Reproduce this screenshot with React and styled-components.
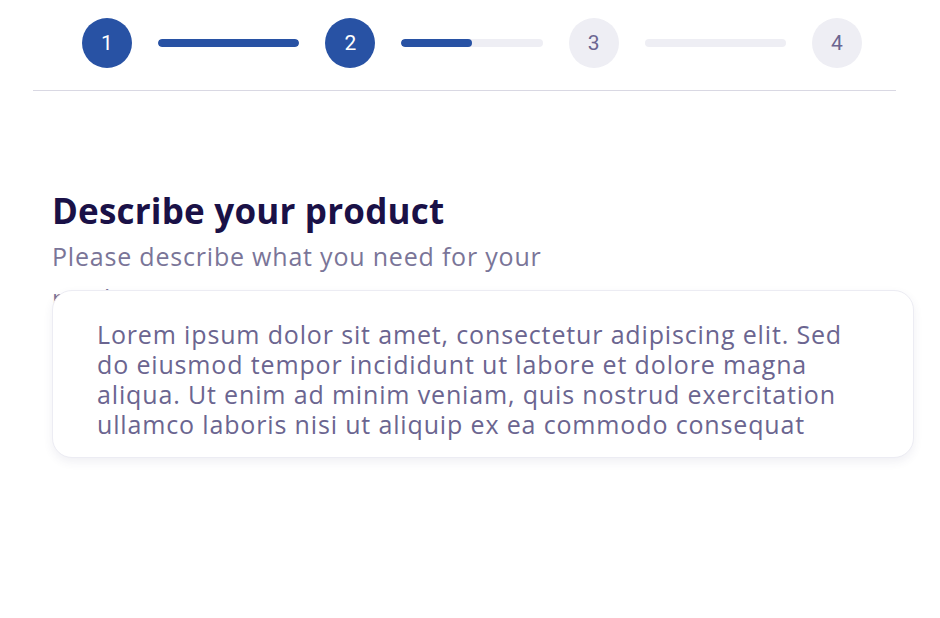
import React from "react";
import styled, { createGlobalStyle } from "styled-components";

const Global = createGlobalStyle`
  html, body { margin: 0; padding: 0; background: #fff; }
  body { font-family: "Open Sans", "Noto Sans", sans-serif; }
`;

const Page = styled.div`
  width: 940px;
  height: 618px;
  box-sizing: border-box;
  padding-top: 18px;
  overflow: hidden;
`;

const Header = styled.div`
  margin: 0 44px 0 33px;
`;

const Stepper = styled.div`
  display: flex;
  align-items: center;
  gap: 26px;
  padding: 0 34px 0 49px;
  height: 50px;
`;

const Circle = styled.div`
  flex: 0 0 50px;
  height: 50px;
  border-radius: 50%;
  display: flex;
  align-items: center;
  justify-content: center;
  font-family: "Roboto", sans-serif;
  font-size: 21px;
  background: ${(p) => (p.$active ? "#2852a4" : "#eeeef4")};
  color: ${(p) => (p.$active ? "#ffffff" : "#6b6590")};
`;

const Track = styled.div`
  flex: 1;
  height: 8px;
  border-radius: 4px;
  background: #eeeef4;
  overflow: hidden;
`;

const Fill = styled.div`
  height: 100%;
  border-radius: 4px;
  background: #2852a4;
`;

const Divider = styled.div`
  height: 1px;
  margin-top: 22px;
  background: #d9d8e3;
`;

const Body = styled.div`
  padding: 99px 26px 0 52px;
`;

const Intro = styled.div`
  height: 100px;
`;

const Title = styled.h1`
  margin: 0;
  font-weight: 700;
  font-size: 35px;
  line-height: 42px;
  letter-spacing: 0.2px;
  color: #1a1147;
`;

const Subtitle = styled.p`
  margin: 3px 0 0;
  max-width: 510px;
  font-size: 25px;
  line-height: 42px;
  letter-spacing: 0.8px;
  color: #7a7598;
`;

const Card = styled.div`
  position: relative;
  z-index: 1;
  background: #fff;
  border: 1px solid #ececf3;
  border-radius: 20px;
  box-shadow: 0 4px 10px rgba(60, 60, 110, 0.08);
  padding: 28px 53px 18px 44px;
  font-size: 25px;
  line-height: 30px;
  letter-spacing: 0.85px;
  color: #6b6590;
`;

export default function App() {
  return (
    <>
      <Global />
      <Page>
        <Header>
          <Stepper>
            <Circle $active>1</Circle>
            <Track>
              <Fill style={{ width: "100%" }} />
            </Track>
            <Circle $active>2</Circle>
            <Track>
              <Fill style={{ width: "50%" }} />
            </Track>
            <Circle>3</Circle>
            <Track />
            <Circle>4</Circle>
          </Stepper>
          <Divider />
        </Header>
        <Body>
          <Intro>
            <Title>Describe your product</Title>
            <Subtitle>Please describe what you need for your product</Subtitle>
          </Intro>
          <Card>
            Lorem ipsum dolor sit amet, consectetur adipiscing elit. Sed do
            eiusmod tempor incididunt ut labore et dolore magna aliqua. Ut enim
            ad minim veniam, quis nostrud exercitation ullamco laboris nisi ut
            aliquip ex ea commodo consequat
          </Card>
        </Body>
      </Page>
    </>
  );
}
